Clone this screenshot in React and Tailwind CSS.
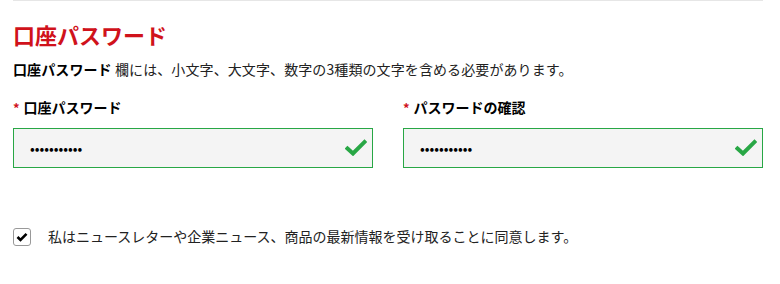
import { useState } from 'react'

const font = { fontFamily: '"Noto Sans CJK JP", "Noto Sans", sans-serif' }

function Check() {
  return (
    <svg width="22" height="17" viewBox="0 0 22 17" className="absolute right-[6px] top-[11px]">
      <path d="M2.5 9.5 L8 14.5 L19.5 3" fill="none" stroke="#28a745" strokeWidth="4" strokeLinecap="square" />
    </svg>
  )
}

function Field({ label }) {
  return (
    <div className="w-[360px]">
      <label className="flex items-center text-[14px] font-bold text-black leading-none">
        <span className="text-[#d0121b] mr-[4px] text-[13px]">*</span>
        {label}
      </label>
      <div className="relative mt-[14px]">
        <input
          type="password"
          defaultValue="aaaaaaaaaaa"
          readOnly
          className="w-full h-[40px] bg-[#f4f4f4] border border-[#28a745] pl-[16px] text-[14px] outline-none"
        />
        <Check />
      </div>
    </div>
  )
}

export default function App() {
  const [agree, setAgree] = useState(true)
  return (
    <div className="w-[780px] h-[284px] bg-white" style={font}>
      <div className="ml-[13px] w-[750px] border-t border-[#e6e6e6]">
        <h2 className="mt-[18px] text-[22px] font-bold text-[#d0121b] leading-[30px]">口座パスワード</h2>
        <p className="mt-[10px] text-[14px] text-[#222] leading-[20px] tracking-[0.1px]">
          <b className="text-black">口座パスワード</b> 欄には、小文字、大文字、数字の3種類の文字を含める必要があります。
        </p>
        <div className="flex gap-[30px] mt-[21px]">
          <Field label="口座パスワード" />
          <Field label="パスワードの確認" />
        </div>
        <label className="flex items-center mt-[58px] text-[14px] text-[#222]">
          <button
            onClick={() => setAgree(!agree)}
            className="w-[18px] h-[18px] border border-[#999] rounded-[3px] flex items-center justify-center bg-white"
          >
            {agree && (
              <svg width="12" height="10" viewBox="0 0 12 10">
                <path d="M1.5 5 L4.5 8 L10.5 1.8" fill="none" stroke="#000" strokeWidth="2.6" />
              </svg>
            )}
          </button>
          <span className="ml-[17px]">私はニュースレターや企業ニュース、商品の最新情報を受け取ることに同意します。</span>
        </label>
      </div>
    </div>
  )
}
